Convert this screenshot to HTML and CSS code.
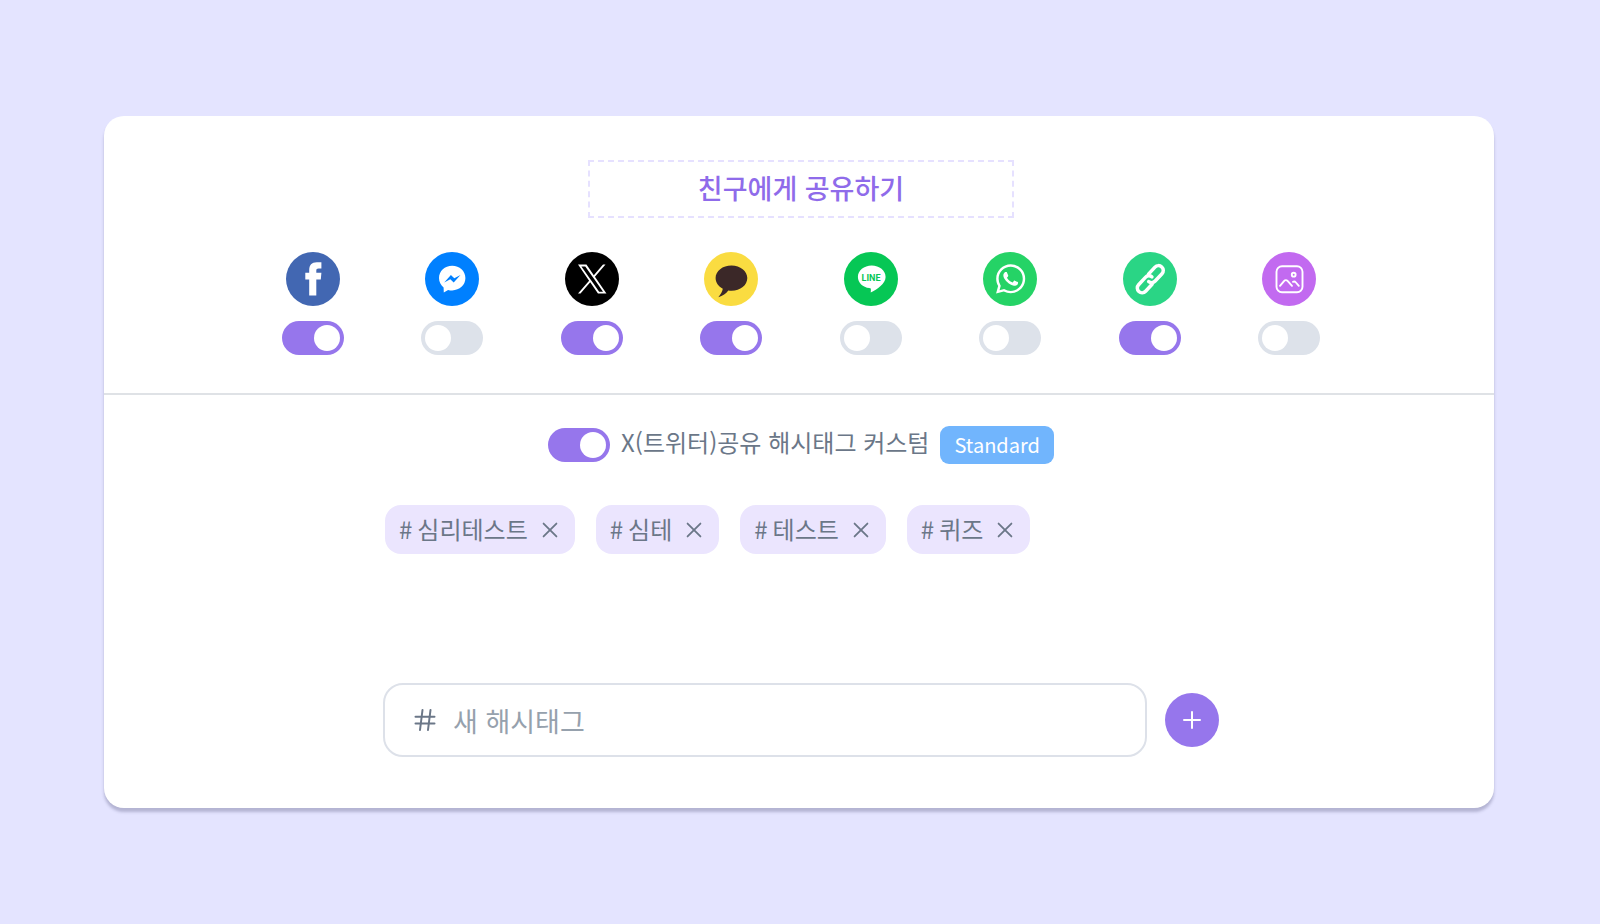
FILE: index.html
```html
<!DOCTYPE html>
<html lang="ko">
<head>
    <meta charset="UTF-8">
    <meta name="viewport" content="width=device-width, initial-scale=1.0">
    <title>친구에게 공유하기</title>
    <link rel="stylesheet" href="styles.css">
</head>
<body>

    <main class="card">
        <section class="share">
            <input class="share-title" type="text" value="친구에게 공유하기" aria-label="공유 제목">

            <div class="service-list">
                <label class="service">
                    <svg class="service-icon" viewBox="0 0 54 54" role="img" aria-label="Facebook">
                        <circle cx="27" cy="27" r="27" fill="#4267b2"/>
                        <path fill="#fff" d="M23.2 43.6V27.4h-3.9v-6.6h3.9v-2.6c0-5 2.4-7.9 7.6-7.9h4.6v6.1h-2.8c-1.8 0-2.3.7-2.3 2.3v2.1h5.1l-.6 6.6h-4.5v16.2z"/>
                    </svg>
                    <input class="toggle" type="checkbox" checked>
                </label>
                <label class="service">
                    <svg class="service-icon" viewBox="0 0 54 54" role="img" aria-label="Messenger">
                        <circle cx="27" cy="27" r="27" fill="#0080ff"/>
                        <path fill="#fff" d="M27.2 13.8c-7.4 0-13.2 5.3-13.2 12.3 0 4 1.8 7.1 4.6 9.3l.2 5 4.3-2.5c1.3.4 2.7.5 4.1.5 7.4 0 13.2-5.3 13.2-12.300s-5.800-12.300-13.200-12.300z"/>
                        <path fill="#0080ff" d="M19.2 30.5l6.700-7.400 3.400 3.200 6.200-3.200-6.800 7.500-3.400-3.300z"/>
                    </svg>
                    <input class="toggle" type="checkbox">
                </label>
                <label class="service">
                    <svg class="service-icon" viewBox="0 0 54 54" role="img" aria-label="X">
                        <circle cx="27" cy="27" r="27" fill="#000"/>
                        <path fill="#fff" transform="translate(13 12.5) scale(.0237)" d="M714.163 519.284L1160.890 0H1055.030L667.137 450.887L357.328 0H0L468.492 681.821L0 1226.370H105.866L515.491 750.218L842.672 1226.370H1200L714.137 519.284H714.163ZM569.165 687.828L521.697 619.934L144.011 79.694H306.615L611.412 515.685L658.880 583.579L1055.080 1150.300H892.476L569.165 687.854V687.828Z"/>
                    </svg>
                    <input class="toggle" type="checkbox" checked>
                </label>
                <label class="service">
                    <svg class="service-icon" viewBox="0 0 54 54" role="img" aria-label="KakaoTalk">
                        <circle cx="27" cy="27" r="27" fill="#fadc41"/>
                        <path fill="#3b2828" d="M27.5 13.4c-8.9 0-15.9 5.5-15.9 12.7 0 4.5 2.8 8.4 7.2 10.7-.6 2.900-2 5.500-4.500 8.500 4.600-1.500 7.700-3.500 10-6.700 1 .2 2.100.2 3.200.2 8.900 0 15.800-5.600 15.800-12.700s-6.900-12.700-15.800-12.700z"/>
                    </svg>
                    <input class="toggle" type="checkbox" checked>
                </label>
                <label class="service">
                    <svg class="service-icon" viewBox="0 0 54 54" role="img" aria-label="LINE">
                        <circle cx="27" cy="27" r="27" fill="#06c755"/>
                        <path fill="#fff" d="M27.7 13.6c-7.7 0-13.8 5-13.8 11.3 0 5.8 4.900 10.200 11.500 11.200 1.600.3 1.700.9 1.300 4.500 6.500-3.300 14.900-9.200 14.900-15.700 0-6.300-6.200-11.300-13.900-11.300z"/>
                        <text class="line-text" x="27" y="28.5">LINE</text>
                    </svg>
                    <input class="toggle" type="checkbox">
                </label>
                <label class="service">
                    <svg class="service-icon" viewBox="0 0 54 54" role="img" aria-label="WhatsApp">
                        <circle cx="27" cy="27" r="27" fill="#25d366"/>
                        <path fill="#fff" transform="translate(13 12.3) scale(1.22)" d="M17.472 14.382c-.297-.149-1.758-.867-2.03-.967-.273-.099-.471-.148-.67.15-.197.297-.767.966-.94 1.164-.173.199-.347.223-.644.075-.297-.15-1.255-.463-2.39-1.475-.883-.788-1.48-1.761-1.653-2.059-.173-.297-.018-.458.13-.606.134-.133.298-.347.446-.52.149-.174.198-.298.298-.497.099-.198.05-.371-.025-.52-.075-.149-.669-1.612-.916-2.207-.242-.579-.487-.5-.669-.51-.173-.008-.371-.01-.57-.01-.198 0-.52.074-.792.372-.272.297-1.04 1.016-1.04 2.479 0 1.462 1.065 2.875 1.213 3.074.149.198 2.096 3.2 5.077 4.487.709.306 1.262.489 1.694.625.712.227 1.36.195 1.871.118.571-.085 1.758-.719 2.006-1.413.248-.694.248-1.289.173-1.413-.074-.124-.272-.198-.57-.347m-5.421 7.403h-.004a9.87 9.87 0 01-5.031-1.378l-.361-.214-3.741.982.998-3.648-.235-.374a9.86 9.86 0 01-1.51-5.26c.001-5.45 4.436-9.884 9.888-9.884 2.64 0 5.122 1.03 6.988 2.898a9.825 9.825 0 012.893 6.994c-.003 5.45-4.437 9.884-9.885 9.884m8.413-18.297A11.815 11.815 0 0012.05 0C5.495 0 .16 5.335.157 11.892c0 2.096.547 4.142 1.588 5.945L.057 24l6.305-1.654a11.882 11.882 0 005.683 1.448h.005c6.554 0 11.89-5.335 11.893-11.893a11.821 11.821 0 00-3.48-8.413z"/>
                    </svg>
                    <input class="toggle" type="checkbox">
                </label>
                <label class="service">
                    <svg class="service-icon" viewBox="0 0 54 54" role="img" aria-label="링크 복사">
                        <circle cx="27" cy="27" r="27" fill="#2ad585"/>
                        <g fill="none" stroke="#fff" stroke-width="3.500" stroke-linecap="round" transform="translate(27.3 27.2) rotate(-47)">
                            <path d="M2.500-4.800h9.500a4.800 4.800 0 0 1 0 9.600H2a4.800 4.800 0 0 1-4.800-4.400"/>
                            <path d="M-2.500 4.800h-9.500a4.800 4.800 0 0 1 0-9.600H-2a4.800 4.800 0 0 1 4.800 4.400"/>
                        </g>
                    </svg>
                    <input class="toggle" type="checkbox" checked>
                </label>
                <label class="service">
                    <svg class="service-icon" viewBox="0 0 54 54" role="img" aria-label="이미지 저장">
                        <circle cx="27" cy="27" r="27" fill="#c26af0"/>
                        <g fill="none" stroke="#fff" stroke-width="1.900" stroke-linecap="round" stroke-linejoin="round">
                            <rect x="14.5" y="14.2" width="26" height="26" rx="5.5"/>
                            <circle cx="31.7" cy="22.7" r="1.9"/>
                            <path d="M18 33.8l4-4.700q1.800-2 3.800 0l4.200 4.700M31 29.800q1.600-.8 2.900.7l2.900 3.300"/>
                        </g>
                    </svg>
                    <input class="toggle" type="checkbox">
                </label>
            </div>
        </section>

        <section class="hashtag">
            <div class="hashtag-head">
                <input class="toggle" type="checkbox" id="customTag" checked>
                <label class="hashtag-label" for="customTag">X(트위터)공유 해시태그 커스텀</label>
                <span class="badge">Standard</span>
            </div>

            <div class="hashtag-body">
                <div class="tag-list" id="tagList">
                    <div class="tag">
                        <span class="tag-text"><span>#</span><span>심리테스트</span></span>
                        <button class="tag-remove" type="button" aria-label="삭제"><svg viewBox="0 0 24 24"><path d="M5 5l14 14M19 5L5 19"/></svg></button>
                    </div>
                    <div class="tag">
                        <span class="tag-text"><span>#</span><span>심테</span></span>
                        <button class="tag-remove" type="button" aria-label="삭제"><svg viewBox="0 0 24 24"><path d="M5 5l14 14M19 5L5 19"/></svg></button>
                    </div>
                    <div class="tag">
                        <span class="tag-text"><span>#</span><span>테스트</span></span>
                        <button class="tag-remove" type="button" aria-label="삭제"><svg viewBox="0 0 24 24"><path d="M5 5l14 14M19 5L5 19"/></svg></button>
                    </div>
                    <div class="tag">
                        <span class="tag-text"><span>#</span><span>퀴즈</span></span>
                        <button class="tag-remove" type="button" aria-label="삭제"><svg viewBox="0 0 24 24"><path d="M5 5l14 14M19 5L5 19"/></svg></button>
                    </div>
                </div>

                <form class="tag-form">
                    <label class="tag-field">
                        <svg class="hash-icon" viewBox="0 0 24 24"><path d="M9.500 2L7 22M17.500 2L15 22M2.500 8.800h19M2.500 15.500h19"/></svg>
                        <input class="tag-input" type="text" placeholder="새 해시태그" aria-label="새 해시태그">
                    </label>
                    <button class="add-button" type="button" aria-label="추가">
                        <svg viewBox="0 0 24 24"><path d="M12 4v16M4 12h16"/></svg>
                    </button>
                </form>
            </div>
        </section>
    </main>

</body>
</html>
```
FILE: styles.css
```css
* {
    box-sizing: border-box;
}
body {
    margin: 0;
    padding: 116px 106px 116px 104px;
    background: #e4e4ff;
    color: #6b7788;
    font-family: "Noto Sans CJK KR", sans-serif;
    font-size: 24px;
}
input, button {
    margin: 0;
    font-family: inherit;
    color: inherit;
}
svg {
    display: block;
}
.card {
    background: #fff;
    border-radius: 20px;
    box-shadow: 0 4px 3px rgba(70, 70, 110, 0.3);
}

/* 공유 버튼 */
.share {
    display: flex;
    flex-direction: column;
    align-items: center;
    gap: 34px;
    padding: 44px 135px 38px 139px;
    border-bottom: 2px solid #dfe2e6;
}
.share-title {
    width: 426px;
    max-width: 100%;
    height: 58px;
    padding: 0 0 4px;
    border: 2px dashed #e6e1ff;
    background: none;
    color: #8f6bea;
    font-size: 27px;
    font-weight: 500;
    text-align: center;
}
.service-list {
    display: grid;
    grid-template-columns: repeat(8, 1fr);
    width: 100%;
}
.service {
    display: flex;
    flex-direction: column;
    align-items: center;
    gap: 15px;
}
.service-icon {
    width: 54px;
    height: 54px;
}
.line-text {
    fill: #06c755;
    font-family: Roboto, sans-serif;
    font-size: 9px;
    font-weight: 700;
    text-anchor: middle;
}
.toggle {
    appearance: none;
    display: flex;
    flex-shrink: 0;
    width: 62px;
    height: 34px;
    padding: 4px;
    border-radius: 17px;
    background: #dde2ea;
    cursor: pointer;
}
.toggle::before {
    content: "";
    width: 26px;
    height: 26px;
    border-radius: 50%;
    background: #fff;
}
.toggle:checked {
    justify-content: flex-end;
    background: #9676ec;
}

/* 해시태그 */
.hashtag {
    padding: 31px 135px 51px 139px;
}
.hashtag-head {
    display: flex;
    justify-content: center;
    align-items: center;
    gap: 11px;
}
.hashtag-label {
    padding-bottom: 6px;
    line-height: 32px;
}
.badge {
    padding: 0 14px;
    border-radius: 9px;
    background: #71b5fd;
    color: #fff;
    font-size: 20px;
    line-height: 38px;
}
.hashtag-body {
    max-width: 836px;
    margin: 0 auto;
    padding-top: 41px;
}
.tag-list {
    display: flex;
    flex-wrap: wrap;
    align-content: flex-start;
    gap: 21px;
    min-height: 178px;
    padding: 0 2px;
}
.tag {
    display: flex;
    align-items: center;
    gap: 11px;
    height: 49px;
    padding: 0 14px;
    border-radius: 16px;
    background: #ebe5fe;
}
.tag-text {
    display: flex;
    gap: 5px;
    padding-bottom: 3px;
}
.tag-remove {
    display: flex;
    padding: 0;
    border: none;
    background: none;
    cursor: pointer;
}
.tag-remove svg {
    width: 22px;
    height: 22px;
}
.hash-icon, .add-button svg {
    width: 24px;
    height: 24px;
}
.tag-remove svg, .hash-icon, .add-button svg {
    fill: none;
    stroke: currentColor;
    stroke-width: 2;
    stroke-linecap: round;
}
.tag-form {
    display: flex;
    align-items: center;
    gap: 18px;
}
.tag-field {
    display: flex;
    flex: 1;
    align-items: center;
    gap: 16px;
    height: 74px;
    padding: 0 28px;
    border: 2px solid #dde1e9;
    border-radius: 20px;
}
.tag-input {
    flex: 1;
    min-width: 0;
    padding: 0;
    border: none;
    outline: none;
    background: none;
    font-size: 27px;
}
.tag-input::placeholder {
    color: #96a1ad;
    opacity: 1;
}
.add-button {
    display: flex;
    justify-content: center;
    align-items: center;
    width: 54px;
    height: 54px;
    padding: 0;
    border: none;
    border-radius: 50%;
    background: #9676ec;
    color: #fff;
    cursor: pointer;
}
```
